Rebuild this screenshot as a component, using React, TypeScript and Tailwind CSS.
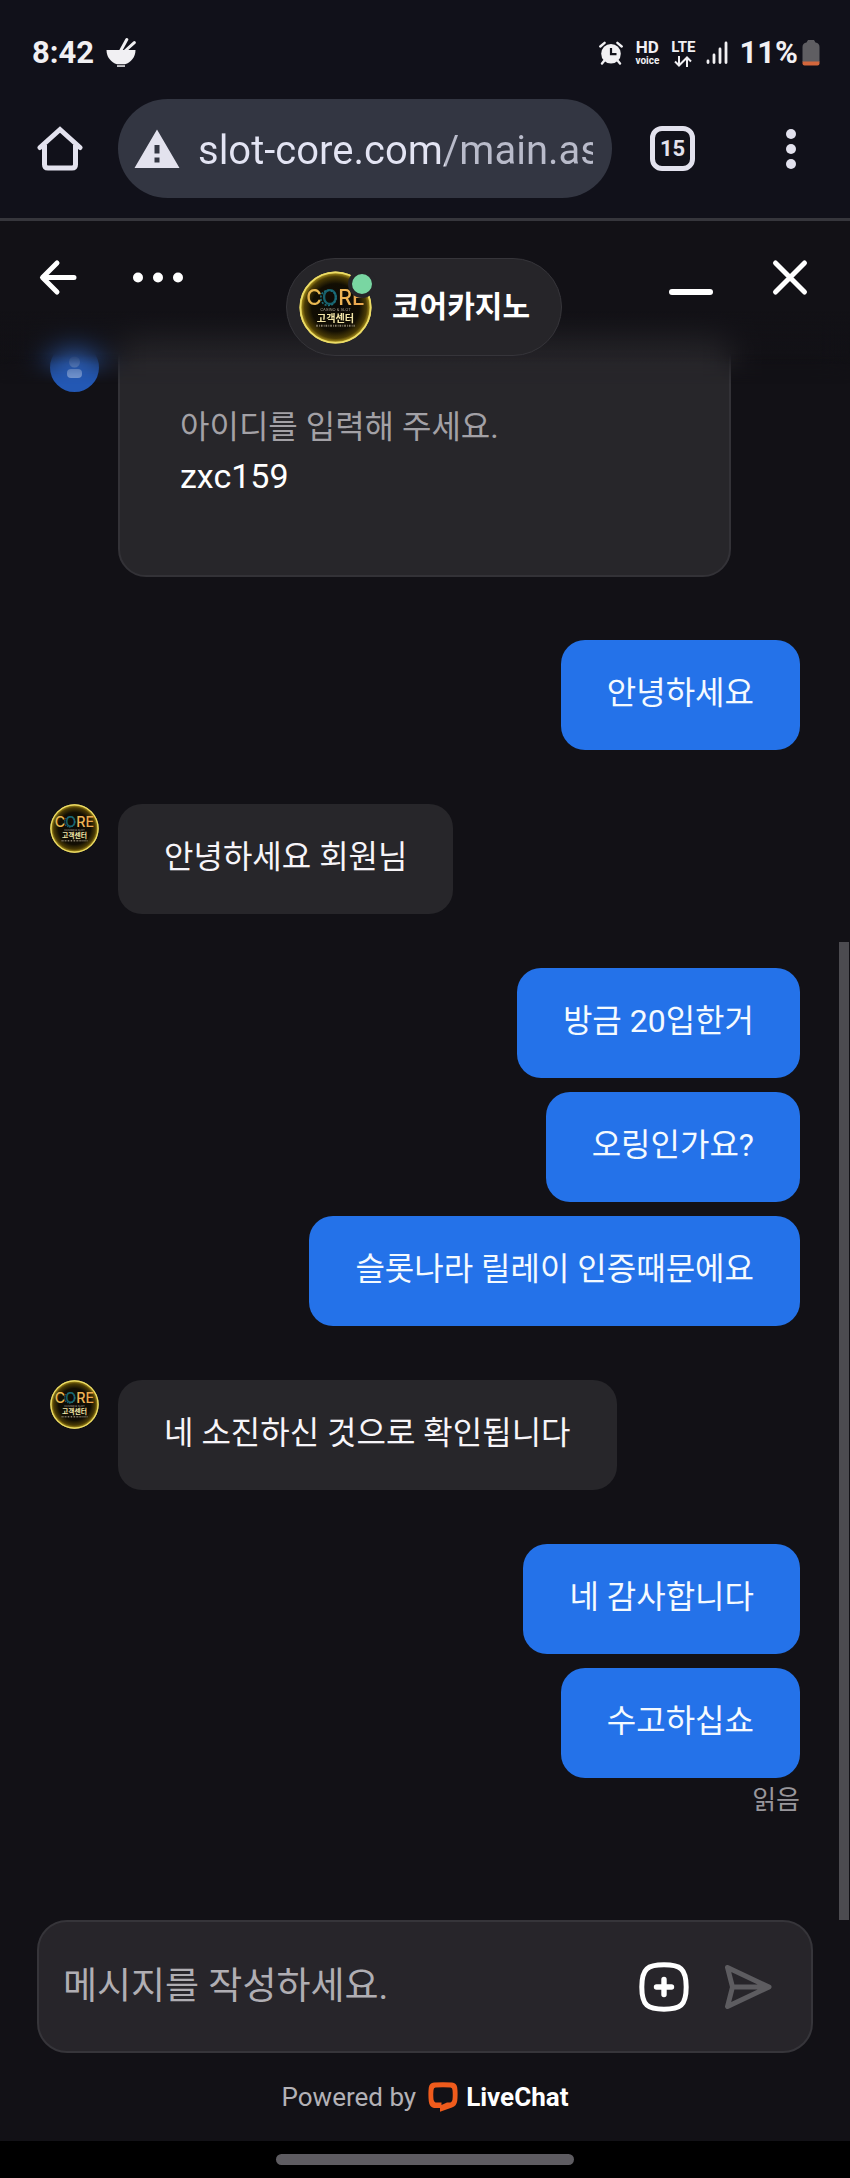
import React from "react";

const avatarId = { header: "core-header", small: "core-small" };

function CoreAvatar({ kind, className }: { kind: "header" | "small"; className: string }) {
  const id = avatarId[kind];
  return (
    <svg viewBox="0 0 72 72" className={className} role="img" aria-label="CORE 고객센터">
      <defs>
        <radialGradient id={id}>
          <stop offset="0" stopColor="#0b0906" />
          <stop offset="0.66" stopColor="#120e03" />
          <stop offset="0.86" stopColor="#4a3b05" />
          <stop offset="0.96" stopColor="#a88f1c" />
          <stop offset="1" stopColor="#e9d75e" />
        </radialGradient>
      </defs>
      <circle cx="36" cy="36" r="35.5" fill={`url(#${id})`} />
      <circle cx="36" cy="36" r="34.6" fill="none" stroke="#ecdc66" strokeWidth="1.8" />
      <text x="36" y="34" textAnchor="middle" fontSize="21" fontFamily="Inter, sans-serif" fontWeight="500">
        <tspan fill="#e9b851">C</tspan>
        <tspan fill="#17606c">O</tspan>
        <tspan fill="#eeb455">R</tspan>
        <tspan fill="#eba94f">E</tspan>
      </text>
      <circle cx="29" cy="26.5" r="7.5" fill="none" stroke="#1d6f7b" strokeWidth="1.6" strokeDasharray="2 1.4" />
      <text x="36" y="39.5" textAnchor="middle" fontSize="4" fontFamily="Inter, sans-serif" fill="#a9a090">
        CASINO &amp; SLOT
      </text>
      <text x="36" y="50" textAnchor="middle" fontSize="10" fontWeight="700" fontFamily="'Noto Sans CJK KR', sans-serif" fill="#f3e6a8">
        고객센터
      </text>
      <path d="M17 54H55" stroke="#8d8470" strokeWidth="2" strokeDasharray="1.6 1.2 0.8 1" />
    </svg>
  );
}

function StatusBar() {
  return (
    <div className="flex items-center justify-between pr-[30px] pl-8 pt-[34px] text-[#f1f0f3]">
      <div className="flex h-[38px] items-center gap-3">
        <time className="text-[31px] leading-[38px] font-bold">8:42</time>
        <svg viewBox="0 0 30 30" className="h-[30px] w-[30px]" fill="currentColor" aria-hidden="true">
          <path d="M0.5 12H29.5C29.5 19 25 24.5 19 26.3H11C5 24.5 0.5 19 0.5 12Z" />
          <path d="M11 27.3H19V28.8H11Z" />
          <path d="M14.5 13L20.8 1.6M19 13L28.3 4.6" stroke="currentColor" strokeWidth="3" strokeLinecap="round" />
        </svg>
      </div>
      <div className="flex h-[38px] items-center">
        <svg viewBox="0 0 24 24" className="h-6 w-6" aria-hidden="true">
          <circle cx="12" cy="12.8" r="9.8" fill="#f1f0f3" />
          <path d="M5 20L3 22.5M19 20L21 22.5M1.3 5.5L5.6 1.8M22.7 5.5L18.4 1.8" stroke="#f1f0f3" strokeWidth="2.4" strokeLinecap="round" />
          <path d="M12 7V13.2H17.5" fill="none" stroke="#11111a" strokeWidth="2.2" />
        </svg>
        <div className="ml-3 flex flex-col items-center">
          <span className="text-[17px] leading-[16px] font-bold">HD</span>
          <span className="text-[10px] leading-[12px] font-bold">voice</span>
        </div>
        <div className="ml-3 flex flex-col items-center gap-0.5">
          <span className="text-[15px] leading-[14px] font-bold">LTE</span>
          <svg viewBox="0 0 20 11" className="h-[11px] w-5" fill="none" stroke="currentColor" strokeWidth="2" aria-hidden="true">
            <path d="M6 0V9.5M2 5.5L6 9.5 10 5.5M14 11V1.5M10 5.5L14 1.5 18 5.5" />
          </svg>
        </div>
        <svg viewBox="0 0 22 24" className="ml-2.5 h-6 w-[22px]" stroke="currentColor" strokeWidth="2.8" strokeLinecap="round" aria-hidden="true">
          <path d="M2 20V21.5M8 14V21.5M14 8V21.5M20 2V21.5" />
        </svg>
        <span className="ml-3 text-[31px] leading-[38px] font-bold">11%</span>
        <svg viewBox="0 0 18 26" className="ml-1 h-[26px] w-[18px]" aria-hidden="true">
          <path d="M6 0H12L13.5 2.5Q17.5 3 17.5 7V22H0.5V7Q0.5 3 4.5 2.5Z" fill="#5f5e62" />
          <path d="M0.5 21.5H17.5V23.5Q17.5 25.5 15.5 25.5H2.5Q0.5 25.5 0.5 23.5Z" fill="#d4673c" />
        </svg>
      </div>
    </div>
  );
}

function BrowserBar() {
  return (
    <div className="flex items-center border-b-[3px] border-[#36363c] pt-[27px] pr-[49px] pb-5 pl-[37px] text-[#e3e2ee]">
      <button type="button" aria-label="홈" className="shrink-0">
        <svg viewBox="0 0 46 46" className="h-[46px] w-[46px]" fill="none" stroke="currentColor" strokeWidth="5" strokeLinecap="round">
          <path d="M3 21.5L23 3.5 43 21.5" strokeLinejoin="miter" />
          <path d="M7.5 19V38.5Q7.5 42 11 42H35Q38.5 42 38.5 38.5V19" strokeLinecap="butt" />
        </svg>
      </button>
      <div className="ml-[35px] flex h-[99px] min-w-0 flex-1 items-center rounded-full bg-[#333642] pr-[19px] pl-4">
        <svg viewBox="0 0 46 40" className="h-10 w-[46px] shrink-0" fill="currentColor" fillRule="evenodd" aria-hidden="true">
          <path d="M23 0.5L45.5 39H0.5ZM20.5 16V24.5H25.5V16ZM20.5 28.5V33.5H25.5V28.5Z" />
        </svg>
        <input
          type="text"
          aria-label="주소"
          defaultValue="slot-core.com/main.as"
          className="ml-[18px] h-15 min-w-0 flex-1 bg-[linear-gradient(90deg,#e3e4f3_247px,#b9bbca_247px)] bg-clip-text pt-1 text-[40px] text-transparent outline-none"
        />
      </div>
      <button
        type="button"
        aria-label="탭 15개"
        className="ml-[38px] flex h-[45px] w-[45px] shrink-0 items-center justify-center rounded-[12px] border-[5px] border-[#e3e2ee] text-[22px] leading-6 font-bold"
      >
        15
      </button>
      <button type="button" aria-label="더보기" className="ml-[86px] shrink-0">
        <svg viewBox="0 0 20 40" className="h-10 w-5" fill="currentColor">
          <circle cx="10" cy="5" r="5" />
          <circle cx="10" cy="20" r="5" />
          <circle cx="10" cy="35" r="5" />
        </svg>
      </button>
    </div>
  );
}

function ChatHeader() {
  return (
    <header className="absolute inset-x-0 top-0 z-10 h-[166px]">
      <div className="absolute inset-0 backdrop-blur-[16px] [mask-image:linear-gradient(#000_80%,transparent_98%)]" />
      <div className="absolute inset-0 bg-[linear-gradient(#121116_54%,transparent_86%)]" />
      <div className="relative grid grid-cols-[1fr_auto_1fr] items-start pt-[37px] pr-[38px] pl-9 text-white">
        <div className="flex items-center gap-[50px]">
          <button type="button" aria-label="뒤로">
            <svg viewBox="0 0 44 38" className="h-[38px] w-11" fill="none" stroke="currentColor" strokeWidth="5" strokeLinecap="round" strokeLinejoin="round">
              <path d="M21 5L6.5 19.5 21 34M7 19.5H38" />
            </svg>
          </button>
          <button type="button" aria-label="메뉴">
            <svg viewBox="0 0 56 38" className="h-[38px] w-14" fill="currentColor">
              <circle cx="8" cy="19.5" r="5" />
              <circle cx="28" cy="19.5" r="5" />
              <circle cx="48" cy="19.5" r="5" />
            </svg>
          </button>
        </div>
        <div className="flex h-[98px] items-center gap-5 rounded-full border border-[#36353a] bg-[#262529] pr-[31px] pl-3">
          <div className="relative">
            <CoreAvatar kind="header" className="h-[73px] w-[73px]" />
            <span className="absolute -top-px -right-1 h-7 w-7 rounded-full border-4 border-[#262529] bg-[#79d6a2]" />
          </div>
          <h1 className="text-[30px] leading-[44px] font-bold">코어카지노</h1>
        </div>
        <div className="flex items-center justify-end gap-[53px]">
          <button type="button" aria-label="최소화">
            <svg viewBox="0 0 48 38" className="h-[38px] w-12" stroke="currentColor" strokeWidth="6" strokeLinecap="round">
              <path d="M5 34H43" />
            </svg>
          </button>
          <button type="button" aria-label="닫기">
            <svg viewBox="0 0 44 38" className="h-[38px] w-11" stroke="currentColor" strokeWidth="5" strokeLinecap="round">
              <path d="M7.5 5L36.5 34M36.5 5L7.5 34" />
            </svg>
          </button>
        </div>
      </div>
    </header>
  );
}

function SentGroup({ messages, children }: { messages: string[]; children?: React.ReactNode }) {
  return (
    <div className="flex flex-col items-end">
      <div className="flex flex-col items-end gap-3.5">
        {messages.map((m) => (
          <p key={m} className="rounded-[24px] bg-[#2472e9] px-[46px] pt-[29px] pb-[33px] text-[32px] leading-[48px] text-[#f4faff]">
            {m}
          </p>
        ))}
      </div>
      {children}
    </div>
  );
}

function AgentMessage({ text }: { text: string }) {
  return (
    <div className="flex items-start gap-[19px]">
      <CoreAvatar kind="small" className="h-[49px] w-[49px] shrink-0" />
      <p className="rounded-[24px] bg-[#27262a] px-[46px] pt-[29px] pb-[33px] text-[32px] leading-[48px] text-[#f7f5f9]">{text}</p>
    </div>
  );
}

function FormCard() {
  return (
    <div className="mb-[9px] flex items-start gap-[19px]">
      <svg viewBox="0 0 49 49" className="mt-[23px] h-[49px] w-[49px] shrink-0" aria-hidden="true">
        <circle cx="24.5" cy="24.5" r="24.5" fill="#2358b4" />
        <circle cx="24.5" cy="19" r="5.5" fill="#7292cb" />
        <rect x="17" y="26" width="15" height="9" rx="4" fill="#7d9dd4" />
      </svg>
      <dl className="mr-[69px] flex-1 rounded-[28px] border-2 border-[#333237] bg-[#27262a] px-[60px] pt-[81px] pb-[74px] leading-[49px]">
        <dt className="text-[32px] text-[#a3a1a6]">아이디를 입력해 주세요.</dt>
        <dd className="text-[34px] text-white">zxc159</dd>
      </dl>
    </div>
  );
}

function Composer() {
  return (
    <form className="mx-[37px] flex h-[133px] items-center rounded-[30px] border-2 border-[#36353a] bg-[#27252a] pr-[38px] pl-6" onSubmit={(e) => e.preventDefault()}>
      <input
        type="text"
        aria-label="메시지"
        placeholder="메시지를 작성하세요."
        className="h-14 min-w-0 flex-1 bg-transparent text-[37px] text-white outline-none placeholder:text-[#b0aeb3] placeholder:opacity-100"
      />
      <button type="button" aria-label="첨부" className="mr-8 text-white">
        <svg viewBox="0 0 50 50" className="h-[50px] w-[50px]" fill="none" stroke="currentColor" strokeWidth="5">
          <path d="M25 2.8C41 2.8 47.2 6 47.2 25S41 47.2 25 47.2 2.8 44 2.8 25 9 2.8 25 2.8Z" />
          <path d="M25 17.5V32.5M17.5 25H32.5" strokeWidth="5.4" strokeLinecap="round" />
        </svg>
      </button>
      <button type="submit" aria-label="보내기" className="text-[#5d5c60]">
        <svg viewBox="0 0 52 50" className="h-[50px] w-[52px]" fill="none" stroke="currentColor" strokeWidth="5" strokeLinecap="round" strokeLinejoin="round">
          <path d="M6.5 5.5L48 25 6.5 44.5 11.5 25ZM11.5 25H46" />
        </svg>
      </button>
    </form>
  );
}

export default function App() {
  return (
    <div className="flex min-h-screen flex-col bg-[#121116] font-[Roboto,'Noto_Sans_CJK_KR',sans-serif]">
      <div className="bg-[#11111a]">
        <StatusBar />
        <BrowserBar />
      </div>
      <div className="relative flex flex-1 flex-col">
        <ChatHeader />
        <main className="relative flex flex-1 flex-col gap-[54px] pt-[99px] pr-[50px] pl-[50px]">
          <FormCard />
          <SentGroup messages={["안녕하세요"]} />
          <AgentMessage text="안녕하세요 회원님" />
          <SentGroup messages={["방금 20입한거", "오링인가요?", "슬롯나라 릴레이 인증때문에요"]} />
          <AgentMessage text="네 소진하신 것으로 확인됩니다" />
          <SentGroup messages={["네 감사합니다", "수고하십쇼"]}>
            <span className="text-[26px] leading-[44px] text-[#98969b]">읽음</span>
          </SentGroup>
          <div className="absolute right-px bottom-0 h-[978px] w-2.5 bg-[#4c4b50]" />
        </main>
        <footer>
          <Composer />
          <div className="flex h-[88px] items-center justify-center text-[26px] leading-8">
            <span className="text-[#b3b1b6]">Powered by</span>
            <a href="#livechat" className="ml-3 flex items-center gap-2 font-bold text-white">
              <svg viewBox="0 0 30 30" className="h-[30px] w-[30px]" aria-hidden="true">
                <path
                  fill="#ef5b1c"
                  fillRule="evenodd"
                  d="M6 0.5Q15 -0.2 24 0.5Q28.5 1 29.2 5.5Q30 12 29.2 19Q28.5 24 24 25.5L12 29.8V26H6Q1.5 25 0.8 19.5Q0 12 0.8 5.5Q1.5 1 6 0.5ZM7.5 5.5Q5.6 5.7 5.5 8Q5 12.5 5.5 17.5Q5.7 19.7 7.5 20.5H13.5V23L19 20.5H22.5Q24.4 19.7 24.5 17.5Q25 12.5 24.5 8Q24.4 5.7 22.5 5.5Q15 5 7.5 5.5Z"
                />
              </svg>
              <span>LiveChat</span>
            </a>
          </div>
        </footer>
      </div>
      <div className="flex h-[37px] items-start justify-center bg-black pt-[13px]">
        <div className="h-[11px] w-[35%] rounded-full bg-[#5e5c61]" />
      </div>
    </div>
  );
}
